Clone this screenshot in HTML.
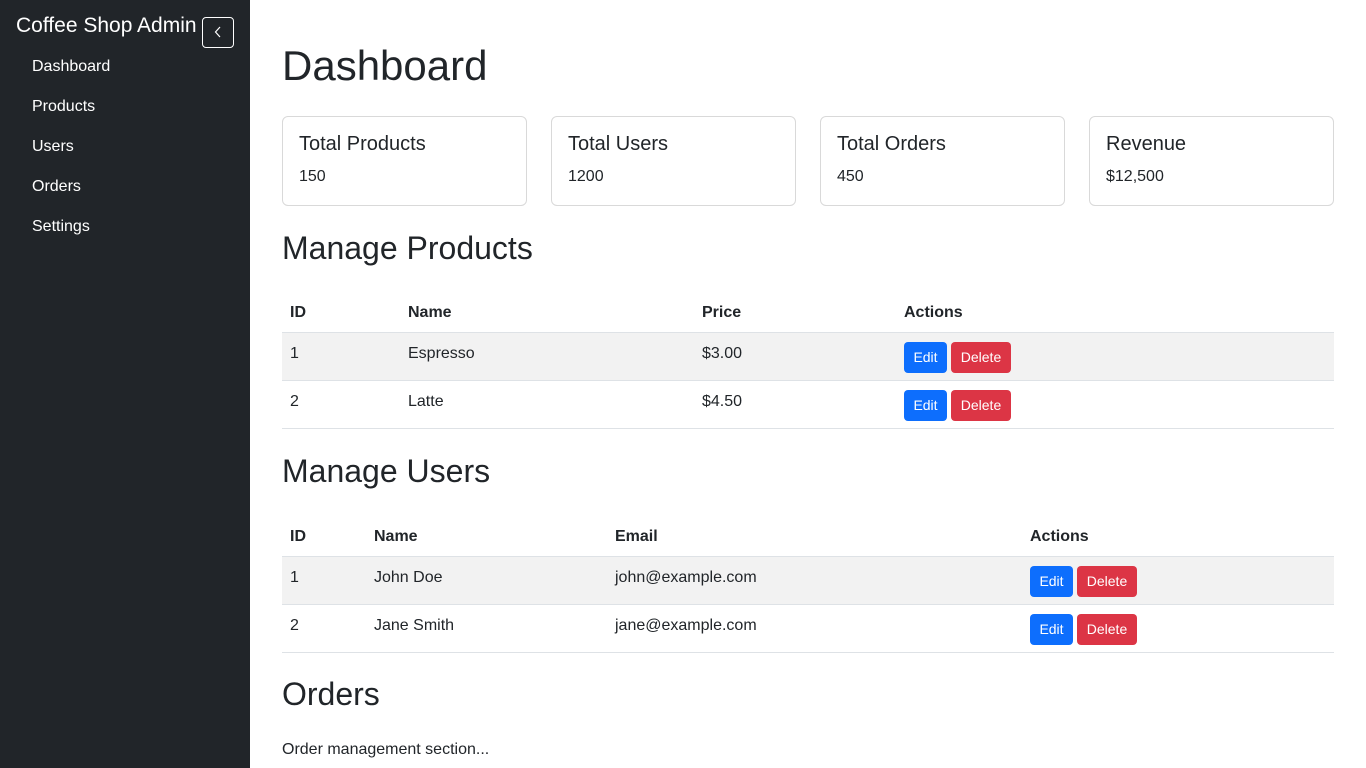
<!DOCTYPE html>
<html><head><meta charset="utf-8"><style>
*{box-sizing:border-box;margin:0;padding:0}
body{width:1366px;height:768px;overflow:hidden;font-family:"Liberation Sans",sans-serif;color:#212529;background:#fff;position:relative;font-size:16px}
.side{position:absolute;left:0;top:0;width:250px;height:768px;background:#212529;color:#fff}
.brand{position:absolute;left:16px;top:14px;font-size:21px}
.tog{position:absolute;left:202px;top:17px;width:32px;height:31px;border:1px solid #fff;border-radius:4px}
.side a{position:absolute;left:32px;font-size:16px;color:#fff}
.abs{position:absolute}
h1{position:absolute;left:282px;top:42px;font-size:42px;font-weight:400}
h2{position:absolute;left:282px;font-size:32px;font-weight:400}
.card{position:absolute;top:116px;width:245px;height:90px;border:1px solid #d9d9d9;border-radius:6px}
.card .t{position:absolute;left:16px;top:16px;font-size:20px}
.card .v{position:absolute;left:16px;top:51px;font-size:16px}
.row{position:absolute;left:282px;width:1052px;height:48px;border-bottom:1px solid #dee2e6}
.row span{position:absolute;top:12px}
.hd{height:37px;border-bottom:1px solid #dee2e6;font-weight:bold}
.hd span{top:8px}
.g{background:#f2f2f2}
.btn{position:absolute;top:9px;height:31px;border-radius:4px;color:#fff;font-size:14px;line-height:31px;text-align:center}
.e{background:#0d6efd;width:43px}.d{background:#dc3545;width:60px}
</style></head><body>
<div class="side">
<div class="brand">Coffee Shop Admin</div>
<div class="tog"><svg width="30" height="29" viewBox="0 0 30 29"><path d="M17 9l-4.5 5 4.5 5" stroke="#fff" fill="none" stroke-width="1.2"/></svg></div>
<a style="top:58px">Dashboard</a><a style="top:98px">Products</a><a style="top:138px">Users</a><a style="top:178px">Orders</a><a style="top:218px">Settings</a>
</div>
<h1>Dashboard</h1>
<div class="card" style="left:282px"><div class="t">Total Products</div><div class="v">150</div></div>
<div class="card" style="left:551px"><div class="t">Total Users</div><div class="v">1200</div></div>
<div class="card" style="left:820px"><div class="t">Total Orders</div><div class="v">450</div></div>
<div class="card" style="left:1089px"><div class="t">Revenue</div><div class="v">$12,500</div></div>
<h2 style="top:230px">Manage Products</h2>
<div class="row hd" style="top:296px"><span style="left:8px">ID</span><span style="left:126px">Name</span><span style="left:420px">Price</span><span style="left:622px">Actions</span></div>
<div class="row g" style="top:333px"><span style="left:8px">1</span><span style="left:126px">Espresso</span><span style="left:420px">$3.00</span><div class="btn e" style="left:622px">Edit</div><div class="btn d" style="left:669px">Delete</div></div>
<div class="row" style="top:381px"><span style="left:8px">2</span><span style="left:126px">Latte</span><span style="left:420px">$4.50</span><div class="btn e" style="left:622px">Edit</div><div class="btn d" style="left:669px">Delete</div></div>
<h2 style="top:453px">Manage Users</h2>
<div class="row hd" style="top:520px"><span style="left:8px">ID</span><span style="left:92px">Name</span><span style="left:333px">Email</span><span style="left:748px">Actions</span></div>
<div class="row g" style="top:557px"><span style="left:8px">1</span><span style="left:92px">John Doe</span><span style="left:333px">john@example.com</span><div class="btn e" style="left:748px">Edit</div><div class="btn d" style="left:795px">Delete</div></div>
<div class="row" style="top:605px"><span style="left:8px">2</span><span style="left:92px">Jane Smith</span><span style="left:333px">jane@example.com</span><div class="btn e" style="left:748px">Edit</div><div class="btn d" style="left:795px">Delete</div></div>
<h2 style="top:676px">Orders</h2>
<div class="abs" style="left:282px;top:741px">Order management section...</div>
</body></html>
